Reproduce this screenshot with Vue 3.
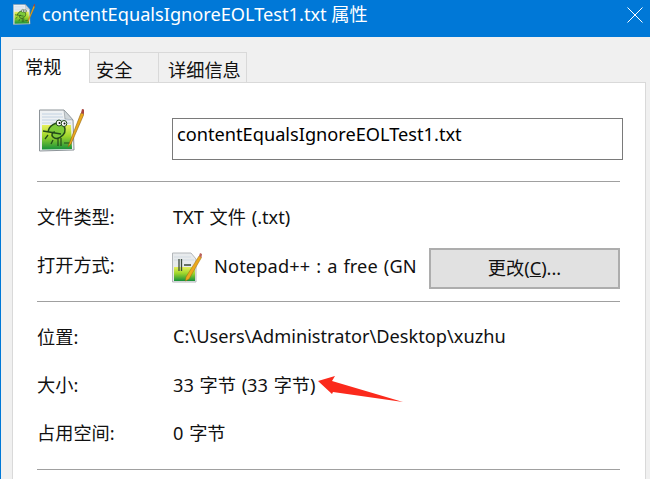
<script setup>
const tabs = [
  { name: '常规', active: true },
  { name: '安全', active: false },
  { name: '详细信息', active: false }
]
</script>

<template>
  <div class="window">
    <header class="titlebar">
      <svg class="title-icon" viewBox="0 0 45 45" width="22" height="22">
        <use href="#npp" />
      </svg>
      <span class="title-text">contentEqualsIgnoreEOLTest1.txt 属性</span>
      <svg class="close" viewBox="0 0 16 16" width="16" height="16">
        <path d="M.5.5l15 15M15.5.5l-15 15" stroke="#fff" stroke-width="1" fill="none" />
      </svg>
    </header>

    <div class="body">
      <nav class="tabs">
        <div v-for="tab in tabs" :key="tab.name" class="tab" :class="{ active: tab.active }">{{ tab.name }}</div>
      </nav>

      <section class="panel">
        <div class="file-row">
          <svg class="file-icon" viewBox="0 0 45 45" width="45" height="45">
            <defs>
              <linearGradient id="leaf" x1="0" y1="0" x2="0" y2="1">
                <stop offset="0" stop-color="#e6ef5a" />
                <stop offset="0.45" stop-color="#9fd62c" />
                <stop offset="1" stop-color="#17913a" />
              </linearGradient>
            </defs>
            <g id="npp">
              <path d="M.5 3H25l9 10 1 30-34.500 1z" fill="#eef1f3" stroke="#8d9499" />
              <path d="M25 3l1 9 8 1z" fill="#cfd6da" stroke="#8d9499" stroke-width=".6" />
              <path d="M3 7h20M3 10h21M3 13h28M3 16h29" stroke="#c2d2e2" />
              <path d="M3 18h29l1 24-30 .5z" fill="url(#leaf)" />
              <path d="M9 25c1-7 8-10 13-8 5 2 5 8 2 11-3 3-7 5-10 2-2-2-1-5 2-5" fill="#7ecb3a" stroke="#234a1a" stroke-width="1.500" />
              <path d="M4 24l18 3M9 28l-3 4M14 33l-2 4" stroke="#234a1a" stroke-width="1.300" fill="none" />
              <ellipse cx="20" cy="16" rx="2.800" ry="3" fill="#fff" stroke="#234a1a" />
              <ellipse cx="25" cy="16.500" rx="2.800" ry="3" fill="#fff" stroke="#234a1a" />
              <circle cx="20.500" cy="16" r="1" fill="#111" />
              <circle cx="25.500" cy="16.500" r="1" fill="#111" />
              <path d="M19 39v-8M22 39v-8M25 36h6" stroke="#234a1a" stroke-width="1.200" />
              <path d="M30 37l12-31 3 1-13 30-3 3z" fill="#eba91d" stroke="#8f6110" stroke-width=".6" />
              <path d="M42 6l1-4 2 .5 0 4.500z" fill="#a8443e" />
            </g>
          </svg>
          <div class="name-box">contentEqualsIgnoreEOLTest1.txt</div>
        </div>

        <hr />

        <div class="info type-row">
          <span class="label">文件类型:</span>
          <span class="value">TXT 文件 (.txt)</span>
        </div>
        <div class="info open-row">
          <span class="label">打开方式:</span>
          <svg class="app-icon" viewBox="0 0 30 31" width="30" height="31">
            <path d="M.5 1H19l5 6v23H.5z" fill="#e8ebed" stroke="#b4b8bb" />
            <path d="M2 5h17M2 8h20" stroke="#d3dbe2" />
            <path d="M2 15h21v14H2z" fill="url(#leaf)" />
            <path d="M7 19V7M9.500 19V7M12 13h7" stroke="#3b4a3b" stroke-width="1.300" />
            <path d="M14 25L27 4l2.500 1.500L17 27l-3.500 2z" fill="#eba91d" stroke="#9b6a12" stroke-width=".5" />
            <path d="M27 4l1-3 2 1-.5 3.500z" fill="#b9605a" />
          </svg>
          <span class="app-name">Notepad++ : a free (GN</span>
          <button class="change" type="button">更改(<u>C</u>)...</button>
        </div>

        <hr class="second" />

        <div class="info location-row">
          <span class="label">位置:</span>
          <span>C:\Users\Administrator\Desktop\xuzhu</span>
        </div>
        <div class="info">
          <span class="label">大小:</span>
          <span class="value">33 字节 (33 字节)</span>
        </div>
        <div class="info">
          <span class="label">占用空间:</span>
          <span class="value">0 字节</span>
        </div>

        <hr class="third" />
      </section>
    </div>

    <svg class="arrow" viewBox="0 0 90 30" width="90" height="30">
      <path d="M1 8L18 3 15 8 86 29 16 19 15 21z" fill="#fb2a1c" />
    </svg>
  </div>
</template>

<style scoped>
.window {
  position: relative;
  width: 650px;
  height: 479px;
  overflow: hidden;
  background: #f0f0f0;
  font-family: "Noto Sans", "Noto Sans CJK SC", sans-serif;
  font-size: 18.2px;
  color: #111;
}

.window * {
  box-sizing: border-box;
}

.titlebar {
  display: flex;
  align-items: flex-start;
  height: 37px;
  padding: 3px 7px 0 13px;
  background: #0078d7;
  color: #fff;
}

.title-icon {
  flex: none;
  margin-right: 7px;
}

.title-text {
  flex: 1;
  line-height: 22px;
}

.close {
  flex: none;
  margin-top: 4px;
}

.body {
  padding: 12px 4px 0 0;
  border-left: 1px solid #0078d7;
}

.tabs {
  display: flex;
  align-items: flex-end;
  height: 33px;
  padding-left: 11px;
}

.tab {
  display: flex;
  align-items: center;
  height: 30px;
  padding: 2px 0 0 9px;
  background: #f0f0f0;
  border: 1px solid #d9d9d9;
  border-left: 0;
  border-bottom: 0;
}

.tab:nth-child(2) {
  width: 69px;
  padding-left: 6px;
}

.tab:nth-child(3) {
  width: 88px;
}

.tab.active {
  position: relative;
  z-index: 1;
  width: 78px;
  height: 34px;
  margin-bottom: -1px;
  padding: 0 0 2px 12px;
  background: #fff;
  border-left: 1px solid #d9d9d9;
}

.panel {
  height: 400px;
  margin-left: 11px;
  padding: 0 22px 0 24px;
  background: #fff;
  border: 1px solid #d9d9d9;
}

.file-row {
  display: flex;
  align-items: flex-start;
  height: 98px;
  padding: 24px 0 0 2px;
}

.file-icon {
  flex: none;
}

.name-box {
  display: flex;
  align-items: center;
  width: 451px;
  height: 42px;
  margin: 11px 0 0 88px;
  padding: 0 4px 10px;
  border: 1px solid #7a7a7a;
  color: #000;
}

hr {
  width: 583px;
  height: 1px;
  margin: 0;
  border: 0;
  background: #a0a0a0;
}

.info {
  display: flex;
  align-items: center;
  height: 48px;
}

.label {
  flex: none;
  width: 136px;
}

.value {
  word-spacing: 1px;
}

.type-row {
  height: 66px;
  padding-top: 2px;
}

.open-row {
  height: 41px;
}

.open-row .label {
  margin-top: -10px;
}

.app-icon {
  flex: none;
  margin: -3px 12px 0 -1px;
}

.app-name {
  width: 215px;
  margin-top: -6px;
  white-space: nowrap;
  overflow: hidden;
  letter-spacing: 0.15px;
  word-spacing: 1px;
}

.change {
  flex: none;
  width: 191px;
  height: 41px;
  margin: 0;
  padding: 0 0 3px;
  background: #e1e1e1;
  border: 2px solid #adadad;
  font: inherit;
  color: inherit;
}

.second {
  margin-top: 12px;
}

.location-row {
  margin-top: 10px;
}

.third {
  margin-top: 13px;
}

.arrow {
  position: absolute;
  left: 317px;
  top: 373px;
}
</style>
